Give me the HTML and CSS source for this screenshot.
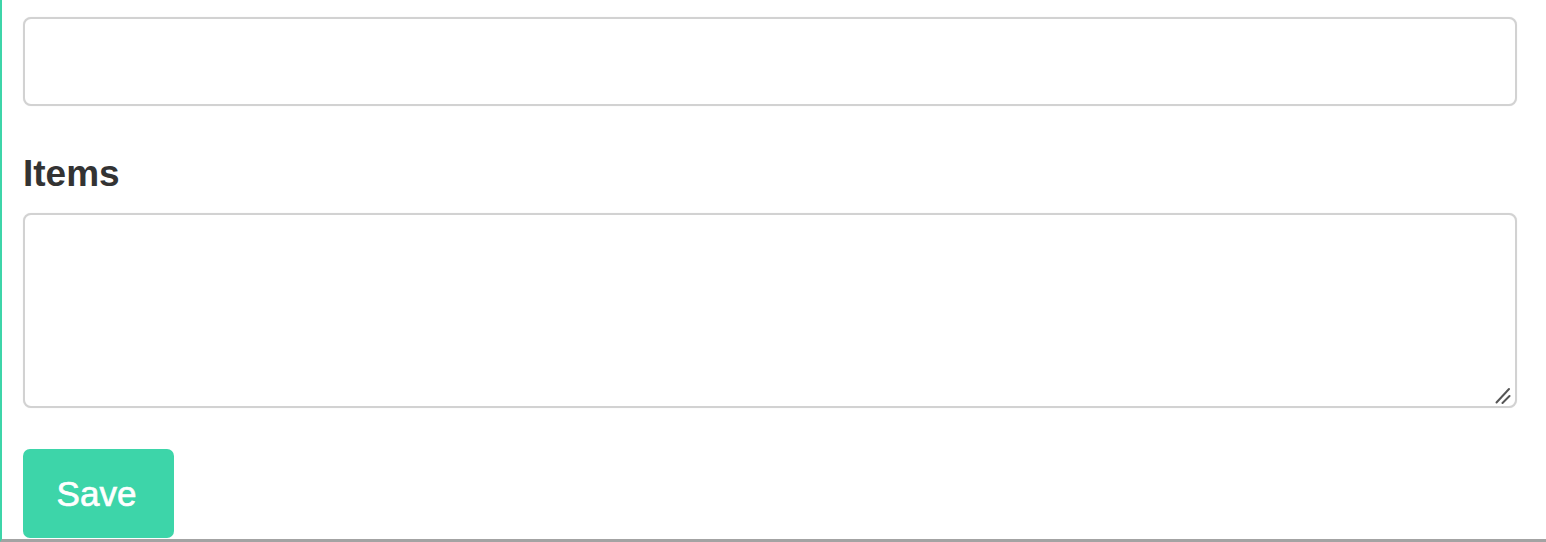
FILE: index.html
```html
<!DOCTYPE html>
<html lang="en">
<head>
<meta charset="utf-8">
<title>Form</title>
<link rel="stylesheet" href="styles.css">
</head>
<body>
<div class="frame">
  <form class="form">
    <input class="field" type="text" aria-label="Name">
    <label class="label" for="items">Items</label>
    <div class="area-wrap">
      <textarea class="field area" id="items"></textarea>
      <svg class="grip" width="16" height="17" viewBox="0 0 16 17" aria-hidden="true">
        <line x1="1.5" y1="15.5" x2="14" y2="2" stroke="#555" stroke-width="2" stroke-linecap="round"/>
        <line x1="7.5" y1="16" x2="14.5" y2="9" stroke="#555" stroke-width="2" stroke-linecap="round"/>
      </svg>
    </div>
    <button class="save" type="button">Save</button>
  </form>
</div>
</body>
</html>
```

FILE: styles.css
```css
* { box-sizing: border-box; }
html, body {
  margin: 0;
  padding: 0;
  background: #fff;
}
body {
  font-family: "Liberation Sans", Arial, Helvetica, sans-serif;
  color: #333;
}
.frame {
  height: 542px;
  border-left: 2px solid #3dd5a9;
  border-bottom: 3px solid #a3a3a3;
  overflow: hidden;
  padding: 17px 29px 0 21px;
}
.form {
  display: flex;
  flex-direction: column;
  align-items: flex-start;
}
.field {
  display: block;
  width: 100%;
  height: 89px;
  margin: 0;
  border: 2px solid #d2d2d2;
  border-radius: 8px;
  background: #fff;
  box-shadow: 0 0 1px rgba(0, 0, 0, 0.12);
  font-family: inherit;
  font-size: 30px;
  outline: none;
}
.label {
  display: block;
  margin-top: 48px;
  font-size: 37px;
  line-height: 40px;
  font-weight: 700;
  color: #333;
}
.area-wrap {
  position: relative;
  width: 100%;
  margin-top: 19px;
}
.area {
  height: 195px;
  resize: none;
}
.grip {
  position: absolute;
  right: 6px;
  bottom: 4px;
  pointer-events: none;
}
.save {
  margin-top: 41px;
  width: 151px;
  height: 89px;
  border: none;
  border-radius: 7px;
  background: #3dd5a9;
  color: #fff;
  font-family: inherit;
  font-size: 35px;
  font-weight: 400;
  -webkit-text-stroke: 0.7px #fff;
  padding: 0 4px 0 0;
  cursor: pointer;
}
```
